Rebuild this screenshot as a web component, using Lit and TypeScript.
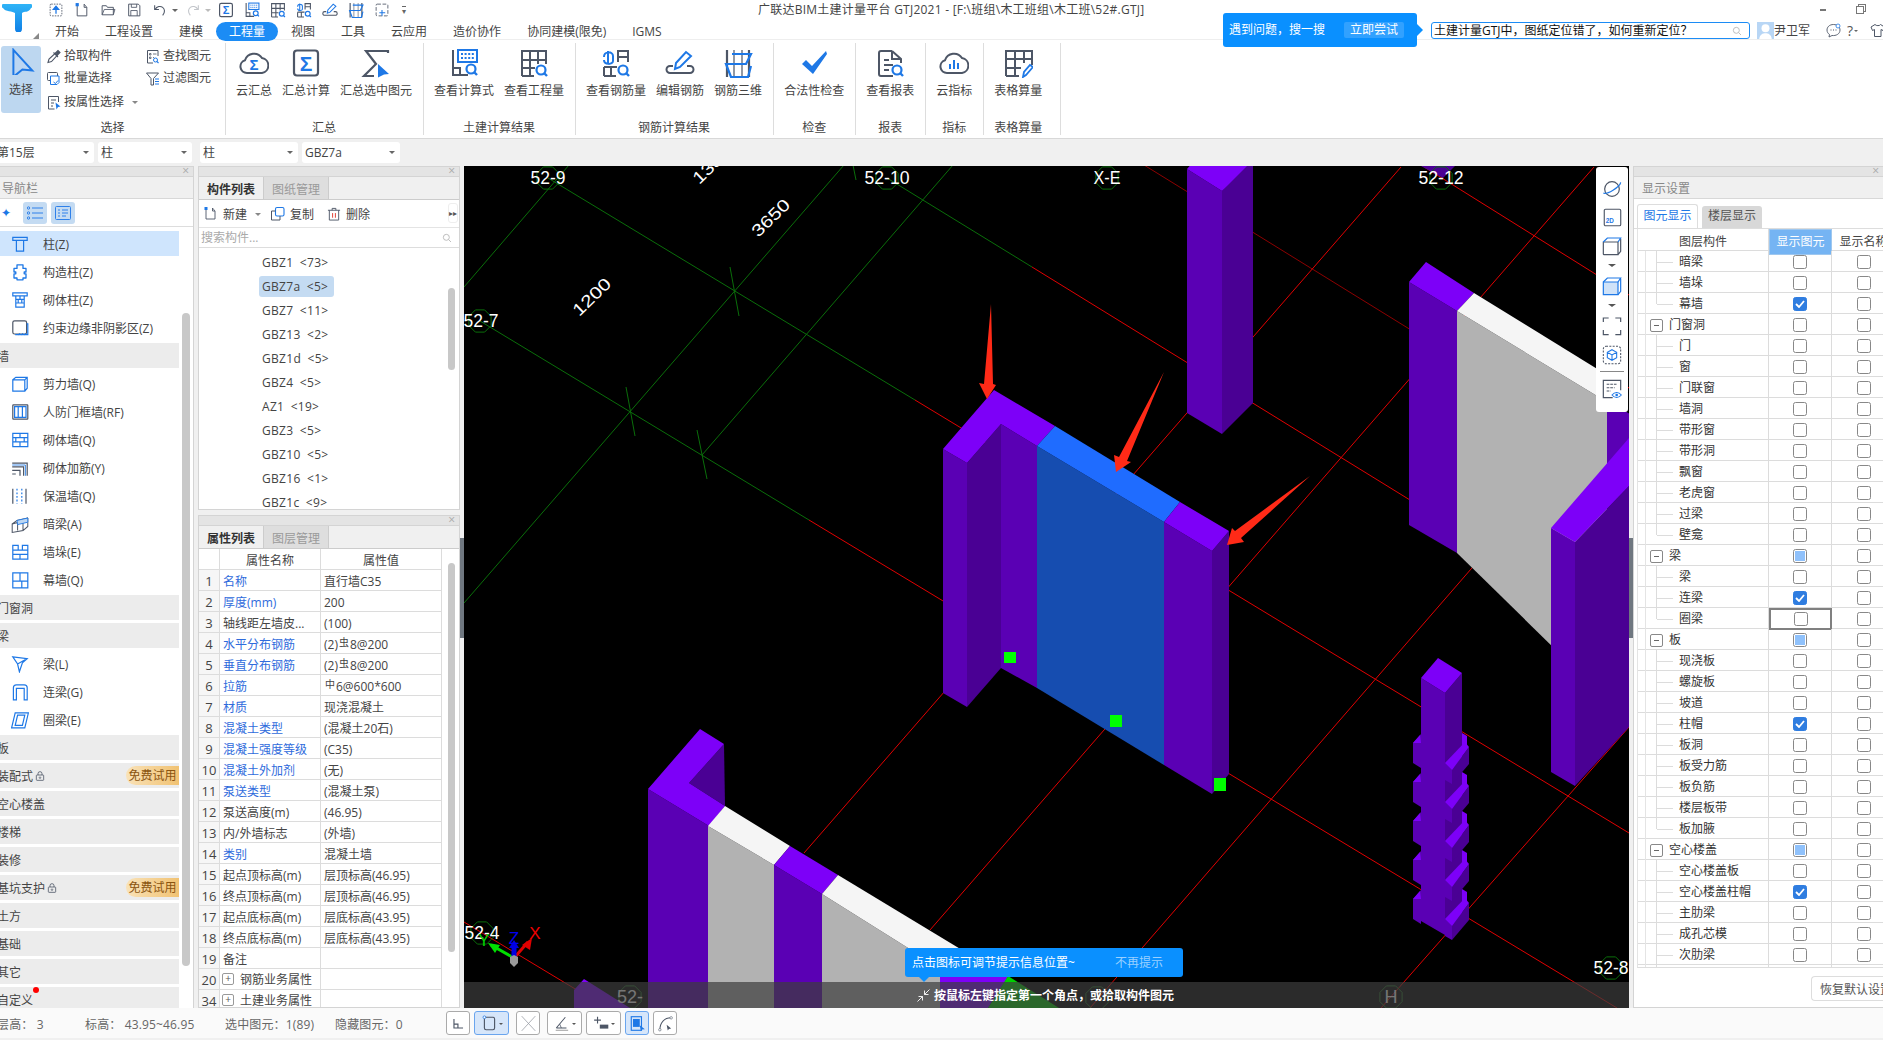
import { LitElement, html, css, svg, TemplateResult } from "lit";
import { customElement } from "lit/decorators.js";

const G = "#4d5666";
const B = "#1e78e6";

const sigma = (x: number, y: number, s: number, c = B) =>
  svg`<text x=${x} y=${y} font-size=${s} font-family="Liberation Sans" font-weight="700" text-anchor="middle" fill=${c} stroke="none">Σ</text>`;

const I: Record<string, TemplateResult> = {
  upload: svg`<rect x="4" y="4" width="22" height="22" rx="2" stroke=${G} stroke-width="1.6" stroke-dasharray="3 2"/><path d="M15 22V12M10 14l5-6 5 6z" stroke=${B} stroke-width="2.4" fill=${B}/>`,
  newdoc: svg`<path d="M6 6v20h18V10h-5V4" stroke=${G} stroke-width="1.8"/><path d="M19 4l5 6" stroke=${G} stroke-width="1.6"/><rect x="3" y="2" width="6" height="6" fill=${B}/>`,
  folder: svg`<path d="M4 24V7h8l2 3h11v14z" stroke=${G} stroke-width="1.8"/><path d="M4 24l4-10h20l-3 10" stroke=${G} stroke-width="1.6"/>`,
  save: svg`<path d="M5 4h18l3 3v19H5z" stroke=${G} stroke-width="1.8"/><path d="M10 4v6h10V4M9 26V16h12v10" stroke=${G} stroke-width="1.6"/>`,
  undo: svg`<path d="M5 6v8h8M6 14c3-6 10-7 14-4s5 9 0 15" stroke=${G} stroke-width="2"/>`,
  redo: svg`<path d="M25 6v8h-8M24 14c-3-6-10-7-14-4s-5 9 0 15" stroke="#c2c5ca" stroke-width="2"/>`,
  boxsum: svg`<rect x="3" y="2.5" width="24" height="25" rx="3" stroke=${G} stroke-width="2.2"/>${sigma(15, 23, 21)}`,
  cloudsum: svg`<path d="M8 25a6.5 6.5 0 0 1-2-12.7A9.5 9.5 0 0 1 23 10a7.6 7.6 0 0 1 0 15z" stroke=${G} stroke-width="2"/>${sigma(15, 22, 15)}`,
  sumsel: svg`<path d="M27 5V3H5l10 13L3 28h10" stroke=${G} stroke-width="2.2"/><path d="M17 16l11 10-5 .5-6 3z" fill=${B}/>`,
  calc: svg`<path d="M4 2v25h15M4 20h7v7" stroke=${G} stroke-width="2"/><rect x="9" y="2" width="19" height="12" stroke=${B} stroke-width="2"/><path d="M12 6h13M12 10h13" stroke=${B} stroke-width="1.8" stroke-dasharray="2 1.6"/><circle cx="22" cy="21" r="4.5" stroke=${B} stroke-width="2.2"/><path d="M25 24l3 3" stroke=${B} stroke-width="2.4"/>`,
  tableq: svg`<path d="M3 28V3h24v13M3 12h24M3 20h13M11 3v25M19 3v13M3 28h12" stroke=${G} stroke-width="2"/><circle cx="22" cy="22" r="4.5" stroke=${B} stroke-width="2.2"/><path d="M25 25l3 3" stroke=${B} stroke-width="2.4"/>`,
  rebarq: svg`<path d="M3 9c0-6 9-6 9-1v5c0 4-9 4-9-1M7 3v12" stroke=${B} stroke-width="2"/><path d="M17 14V3h10v11M17 9h10M3 19h13M3 28V19M3 28h12M10 19v9" stroke=${G} stroke-width="2"/><circle cx="22" cy="22" r="4.5" stroke=${B} stroke-width="2.2"/><path d="M25 25l3 3" stroke=${B} stroke-width="2.4"/>`,
  editreb: svg`<path d="M8 18H5a2.5 2.5 0 0 0 0 7h20a2.5 2.5 0 0 0 0-7h-3" stroke=${G} stroke-width="2"/><path d="M10 21l1-6L21 4l5 4-11 11z" stroke=${B} stroke-width="2"/>`,
  reb3d: svg`<path d="M4 2v27M26 2v27" stroke=${G} stroke-width="2.2"/><path d="M11 2v27M19 2v27" stroke=${G} stroke-width="1.2"/><path d="M9 6h19l-5 10H3l5 13h17l3-11" stroke=${B} stroke-width="2.2"/>`,
  check: svg`<path d="M3 16l4-4 6 6L27 3l1 3-14 20z" fill=${B}/>`,
  report: svg`<path d="M17 3H6a2 2 0 0 0-2 2v21a2 2 0 0 0 2 2h12M17 3l9 8v4M17 3v8h9" stroke=${G} stroke-width="2"/><path d="M9 12h5M9 17h9M9 22h5" stroke=${G} stroke-width="2"/><circle cx="22" cy="22" r="4.5" stroke=${B} stroke-width="2.2"/><path d="M25 25l3 3" stroke=${B} stroke-width="2.4"/>`,
  cloudbar: svg`<path d="M8 25a6.5 6.5 0 0 1-2-12.7A9.5 9.5 0 0 1 23 10a7.6 7.6 0 0 1 0 15z" stroke=${G} stroke-width="2"/><path d="M11 16v5M15 12v9M19 15v6" stroke=${B} stroke-width="2"/>`,
  tableedit: svg`<path d="M3 28V3h26v14M3 11h26M3 20h15M12 3v25M21 3v12M3 28h13" stroke=${G} stroke-width="2"/><path d="M20 29l1-5 6-7 3 2-7 8z" stroke=${B} stroke-width="1.8"/>`,
  copyplus: svg`<rect x="4" y="4" width="22" height="22" rx="2" stroke=${G} stroke-width="1.6" stroke-dasharray="7 3"/><path d="M15 15v11M10 20h11" stroke=${B} stroke-width="2"/>`,
  arrow: svg`<path d="M6 2l21 23-11 -1-10 8z" stroke=${B} stroke-width="2.2" fill="#bcd6f2"/>`,
  dropper: svg`<path d="M4 27l2-7L18 9l4 4L11 25z" stroke=${G} stroke-width="2.2"/><path d="M15 7l9 9M19 8l5-5 4 4-5 5z" stroke=${G} stroke-width="2.2" fill=${G}/>`,
  batch: svg`<rect x="3" y="3" width="20" height="16" rx="2" stroke=${G} stroke-width="2"/><path d="M9 10h17v13l-4 4H9z" stroke=${B} stroke-width="2" fill="#fff"/><path d="M15 22l4 3 5-6" stroke=${B} stroke-width="2"/>`,
  prop: svg`<path d="M25 14V3H5v25h12" stroke=${G} stroke-width="2"/><path d="M10 10h10M10 16h6M10 22h4" stroke=${G} stroke-width="2"/><path d="M19 15l10 8-5 1-3 5z" fill=${B}/>`,
  find: svg`<path d="M26 14V3H5v25h11" stroke=${G} stroke-width="2"/><path d="M9 9h3v3H9zM16 10h7M9 16h3v3H9zM16 17h2" stroke=${G} stroke-width="1.6"/><circle cx="21" cy="22" r="4" stroke=${B} stroke-width="2"/><path d="M24 25l3 3" stroke=${B} stroke-width="2.2"/>`,
  filter: svg`<path d="M3 4h24L17 15v13h-5V15z" stroke=${G} stroke-width="2"/><path d="M20 16h8M20 21h8M20 26h8" stroke=${B} stroke-width="2"/>`,
  copy: svg`<rect x="11" y="3" width="17" height="17" rx="3" stroke=${B} stroke-width="2.2"/><path d="M11 10H3v18h17v-8" stroke=${G} stroke-width="2"/>`,
  del: svg`<path d="M5 7v21h20V7M2 7h26M11 7V3h8v4" stroke=${G} stroke-width="2"/><path d="M12 13v10M18 13v10" stroke="#e0372c" stroke-width="2"/>`,
  zhu: svg`<path d="M3 4h24v5H3zM9 9h12v18H9z" stroke=${B} stroke-width="2"/>`,
  gzz: svg`<path d="M10 3h10v6h5v6h-3v3h3v7h-5v3H10v-3H5v-7h3v-3H5V9h5z" stroke=${B} stroke-width="2.2" stroke-linejoin="round"/>`,
  qtz: svg`<path d="M3 3h24v5H3zM8 8h14v19H8zM8 14h14M8 20h14M15 8v6M12 14v6M18 14v6" stroke=${B} stroke-width="2"/>`,
  edge: svg`<rect x="3" y="3" width="23" height="22" rx="3" stroke=${G} stroke-width="2"/><path d="M26 8h2v18H8v-1M12 27l3-3M17 27l3-3M22 27l3-3" stroke=${B} stroke-width="2"/>`,
  wall: svg`<path d="M3 8h20v19H3zM3 8l5-4h19v18l-4 5M23 8l4-4" stroke=${B} stroke-width="2"/>`,
  rf: svg`<rect x="3" y="3" width="25" height="24" rx="1" stroke=${G} stroke-width="2"/><path d="M6 6h19v18H6zM12 6v18M19 6v18" stroke=${B} stroke-width="2"/>`,
  brick: svg`<path d="M3 4h25v22H3zM3 11h25M3 18h25M15 4v7M8 11v7M22 11v7M15 18v8" stroke=${B} stroke-width="2"/>`,
  jiajin: svg`<path d="M2 7h25v21M2 13h19v15M2 19h13v9M2 25h6" stroke=${G} stroke-width="2"/><path d="M2 10h22v18" stroke=${B} stroke-width="1.4"/>`,
  baowen: svg`<path d="M3 3v25M25 3v25" stroke=${G} stroke-width="2"/><path d="M10 3v25M18 3v25" stroke=${B} stroke-width="2" stroke-dasharray="3 3"/>`,
  anliang: svg`<path d="M2 15l18-5v16L2 29zM2 15l8-6 18-4-8 5M28 5v14l-8 7M11 12v14" stroke=${G} stroke-width="1.7"/><path d="M10 9l18-4v7l-17 4z" fill="#bcd6f2" stroke=${B} stroke-width="1.5"/>`,
  duo: svg`<path d="M3 4h9v8h7V4h9v23H3zM3 12h9M19 12h9M3 19h25M15 19v8" stroke=${B} stroke-width="2"/>`,
  mu: svg`<path d="M3 3h25v25H3zM15 3v14M3 17h25M18 17v11" stroke=${B} stroke-width="2"/>`,
  liang: svg`<path d="M3 3l24 3-8 7-5 15-3-13zM11 15L27 6M3 3l8 12" stroke=${B} stroke-width="2"/>`,
  lian: svg`<path d="M4 28V8a5 5 0 0 1 5-5h13a5 5 0 0 1 5 5v20h-5V9H9v19z" stroke=${B} stroke-width="2"/>`,
  quan: svg`<path d="M7 3h22l-6 25H1zM11 7h12l-4 17H7z" stroke=${B} stroke-width="2"/>`,
  orbit: svg`<circle cx="15" cy="15" r="11" stroke=${G} stroke-width="1.8"/><path d="M2 21C7 24 27 12 28 5" stroke=${B} stroke-width="1.8"/>`,
  d2: svg`<rect x="2" y="2" width="26" height="26" rx="2" stroke=${G} stroke-width="1.8"/><text x="4.5" y="24" font-size="10" font-family="Liberation Sans" font-weight="700" fill=${B} stroke="none">2D</text>`,
  cube: svg`<path d="M2 9h22v19H3a1 1 0 0 1-1-1zM24 28l4-5V4" stroke=${G} stroke-width="1.8"/><path d="M2 9l6-6h20l-4 6" stroke=${B} stroke-width="1.8"/>`,
  cubef: svg`<path d="M2 9h22v19H2z" stroke=${B} stroke-width="1.8" fill="#cfe2f8"/><path d="M24 28l4-5V4M2 9l6-6h20l-4 6" stroke=${B} stroke-width="1.8"/>`,
  frame: svg`<path d="M2 9V3h8M20 3h8v6M28 21v7h-8M10 28H2v-7" stroke=${G} stroke-width="1.8"/>`,
  dcube: svg`<rect x="2" y="2" width="26" height="26" rx="4" stroke=${G} stroke-width="1.6" stroke-dasharray="3 2"/><path d="M15 7l7 4v8l-7 4-7-4v-8zM8 11l7 4 7-4M15 15v8" stroke=${B} stroke-width="1.6"/>`,
  listeye: svg`<path d="M28 17V2H2v26h14" stroke=${G} stroke-width="1.8"/><path d="M7 8h16M7 13h12M7 18h6" stroke=${G} stroke-width="1.6" stroke-dasharray="4 1.4"/><path d="M15 24c4-5 10-5 14 0-4 5-10 5-14 0z" stroke=${B} stroke-width="1.6"/><circle cx="22" cy="24" r="2" fill=${B}/>`,
  sb0: svg`<path d="M7 7v16h16M7 16h7v7" stroke=${G} stroke-width="2"/>`,
  sb1: svg`<rect x="6" y="4" width="18" height="22" rx="3" stroke=${G} stroke-width="2"/><circle cx="6" cy="4" r="2.4" fill="#fff" stroke=${B} stroke-width="1.4"/>`,
  sb2: svg`<path d="M3 2l24 26M27 2L3 28" stroke="#9a9ea5" stroke-width="1.4"/>`,
  sb3: svg`<path d="M4 23L20 4M4 23h18" stroke=${G} stroke-width="1.8"/><path d="M10 16l3 7" stroke=${G} stroke-width="1.4"/><path d="M3 27h22" stroke="#aaa" stroke-width="2"/>`,
  sb4: svg`<path d="M8 3v12M2 9h12" stroke=${G} stroke-width="2"/><rect x="12" y="17" width="15" height="7" fill=${G}/>`,
  sb5: svg`<rect x="4" y="3" width="18" height="24" stroke=${B} stroke-width="2"/><rect x="7" y="7" width="12" height="14" fill=${B}/><path d="M19 18l9 7-5 .5-2 3z" fill=${B}/>`,
  sb6: svg`<path d="M5 27c0-14 8-22 20-22" stroke=${G} stroke-width="1.8"/><circle cx="5" cy="26" r="2.2" fill="#fff" stroke=${G}/><circle cx="25" cy="5" r="2.2" fill="#fff" stroke=${G}/><path d="M17 17l8 7-4 .5-2 3z" fill=${G}/>`,
  mag: svg`<circle cx="13" cy="13" r="9" stroke="#b5b5b5" stroke-width="2.6"/><path d="M20 20l7 7" stroke="#b5b5b5" stroke-width="2.6"/>`,
  lock: svg`<rect x="4" y="12" width="22" height="16" rx="2" stroke=${G} stroke-width="2.4"/><path d="M9 12V8a6 6 0 0 1 12 0v4" stroke=${G} stroke-width="2.4"/><circle cx="15" cy="20" r="2.4" stroke=${G} stroke-width="2"/>`,
  chat: svg`<path d="M15 3C7 3 2 8 2 14c0 4 2 7 5 9l-1 5 6-3c8 1 16-3 16-11 0-6-5-11-13-11z" stroke=${G} stroke-width="1.8"/><path d="M9 14h2M14 14h2M19 14h2" stroke=${G} stroke-width="2"/><circle cx="24" cy="6" r="4" fill="#fff" stroke=${B} stroke-width="1.6"/>`,
  shirt: svg`<path d="M10 3L2 8l3 7 4-2v14h13V13l4 2 3-7-8-5c-1 3-9 3-11 0z" stroke=${G} stroke-width="2"/>`,
  avatar: svg`<rect width="30" height="30" fill="#b8d6f5"/><circle cx="15" cy="11" r="7" fill="#fff"/><path d="M4 30c1-8 6-10 11-10s10 2 11 10z" fill="#fff"/>`,
  pinch: svg`<path d="M17 13l10-10M17 5v8h8M13 17L3 27M13 25v-8H5" stroke="#fff" stroke-width="1.8"/>`,
};

const ic = (n: string, s = 30) =>
  html`<svg class="ic" width=${s} height=${s} viewBox="0 0 30 30" fill="none">${I[n]}</svg>`;

type Nav = { t: string; i?: string; g?: boolean; sel?: boolean; lock?: boolean; free?: boolean; dot?: boolean };
const NAV: Nav[] = [
  { t: "柱(Z)", i: "zhu", sel: true }, { t: "构造柱(Z)", i: "gzz" }, { t: "砌体柱(Z)", i: "qtz" }, { t: "约束边缘非阴影区(Z)", i: "edge" },
  { t: "墙", g: true }, { t: "剪力墙(Q)", i: "wall" }, { t: "人防门框墙(RF)", i: "rf" }, { t: "砌体墙(Q)", i: "brick" },
  { t: "砌体加筋(Y)", i: "jiajin" }, { t: "保温墙(Q)", i: "baowen" }, { t: "暗梁(A)", i: "anliang" }, { t: "墙垛(E)", i: "duo" }, { t: "幕墙(Q)", i: "mu" },
  { t: "门窗洞", g: true }, { t: "梁", g: true }, { t: "梁(L)", i: "liang" }, { t: "连梁(G)", i: "lian" }, { t: "圈梁(E)", i: "quan" },
  { t: "板", g: true }, { t: "装配式", g: true, lock: true, free: true }, { t: "空心楼盖", g: true }, { t: "楼梯", g: true }, { t: "装修", g: true },
  { t: "基坑支护", g: true, lock: true, free: true }, { t: "土方", g: true }, { t: "基础", g: true }, { t: "其它", g: true }, { t: "自定义", g: true, dot: true },
];

const COMPS = ["GBZ1 <73>", "GBZ7a <5>", "GBZ7 <11>", "GBZ13 <2>", "GBZ1d <5>", "GBZ4 <5>", "AZ1 <19>", "GBZ3 <5>", "GBZ10 <5>", "GBZ16 <1>", "GBZ1c <9>"];

type Prop = [string, string, string, boolean, number?];
const PROPS: Prop[] = [
  ["1", "名称", "直行墙C35", true], ["2", "厚度(mm)", "200", true], ["3", "轴线距左墙皮...", "(100)", false],
  ["4", "水平分布钢筋", "(2)|虫|8@200", true], ["5", "垂直分布钢筋", "(2)|虫|8@200", true], ["6", "拉筋", "|中|6@600*600", true],
  ["7", "材质", "现浇混凝土", true], ["8", "混凝土类型", "(混凝土20石)", true], ["9", "混凝土强度等级", "(C35)", true],
  ["10", "混凝土外加剂", "(无)", true], ["11", "泵送类型", "(混凝土泵)", true], ["12", "泵送高度(m)", "(46.95)", false],
  ["13", "内/外墙标志", "(外墙)", false], ["14", "类别", "混凝土墙", true], ["15", "起点顶标高(m)", "层顶标高(46.95)", false],
  ["16", "终点顶标高(m)", "层顶标高(46.95)", false], ["17", "起点底标高(m)", "层底标高(43.95)", false], ["18", "终点底标高(m)", "层底标高(43.95)", false],
  ["19", "备注", "", false], ["20", "钢筋业务属性", "", false, 1], ["34", "土建业务属性", "", false, 1],
];

type Lay = { t: string; k?: "c" | "g" | "p" | "l"; g?: boolean; last?: boolean; focus?: boolean };
const LAYERS: Lay[] = [
  { t: "暗梁" }, { t: "墙垛" }, { t: "幕墙", k: "c", last: true }, { t: "门窗洞", g: true },
  { t: "门" }, { t: "窗" }, { t: "门联窗" }, { t: "墙洞" }, { t: "带形窗" }, { t: "带形洞" }, { t: "飘窗" }, { t: "老虎窗" }, { t: "过梁" }, { t: "壁龛", last: true },
  { t: "梁", g: true, k: "p" }, { t: "梁" }, { t: "连梁", k: "c" }, { t: "圈梁", last: true, focus: true },
  { t: "板", g: true, k: "p" }, { t: "现浇板" }, { t: "螺旋板" }, { t: "坡道" }, { t: "柱帽", k: "c" }, { t: "板洞" }, { t: "板受力筋" }, { t: "板负筋" }, { t: "楼层板带" }, { t: "板加腋", last: true },
  { t: "空心楼盖", g: true, k: "p" }, { t: "空心楼盖板" }, { t: "空心楼盖柱帽", k: "c" }, { t: "主肋梁" }, { t: "成孔芯模" }, { t: "次肋梁" }, { t: "" },
];

const BR = "#7d00f8", F1 = "#5a00b4", F2 = "#4a0094", BT = "#1f6cff", BF = "#164db0", WT = "#f5f5f5", GF = "#b2b2b2";
const poly = (p: string, f: string) => svg`<polygon points=${p} fill=${f}/>`;
const seg = (a: number, b: number, c: number, d: number, col: string) => svg`<line x1=${a} y1=${b} x2=${c} y2=${d} stroke=${col} stroke-width="1"/>`;
const GL = "#0a6e0a", RL = "#e00000", DR = "#8c0000";

const hex = (x: number, y: number, col = GL) => {
  const pts = [0, 1, 2, 3, 4, 5, 6, 7].map((i) => {
    const a = (Math.PI / 4) * i + Math.PI / 8;
    return `${(x + 12 * Math.cos(a)).toFixed(1)},${(y + 12 * Math.sin(a)).toFixed(1)}`;
  }).join(" ");
  return svg`<polygon points=${pts} fill="none" stroke=${col}/>`;
};
const lab = (x: number, y: number, t: string, w: number, col = "#fff") =>
  svg`<text x=${x} y=${y} fill=${col} font-family="Liberation Sans" font-size="18" text-anchor="middle" dominant-baseline="central" textLength=${w} lengthAdjust="spacingAndGlyphs">${t}</text>`;
const dim = (x: number, y: number, t: string) =>
  svg`<text transform="translate(${x} ${y}) rotate(-44)" fill="#fff" font-family="Liberation Sans" font-size="17" text-anchor="middle" dominant-baseline="central" textLength="46" lengthAdjust="spacingAndGlyphs">${t}</text>`;

function knobs() {
  const out: TemplateResult[] = [];
  for (let i = 0; i < 5; i++) {
    const y = 743 + i * 39;
    out.push(poly(`1462,${y - 10} 1467,${y - 7} 1467,${y + 3} 1462,${y + 8}`, BR));
    out.push(poly(`1413,${y} 1421,${y - 9} 1421,${y + 25} 1413,${y + 20}`, F1));
    out.push(poly(`1413,${y} 1420,${y - 8} 1421,${y}`, BR));
  }
  out.push(poly("1421,678 1445,693 1445,935 1421,921", F1));
  out.push(poly("1445,693 1462,673 1462,915 1445,935", F2));
  out.push(poly("1438,658 1421,678 1445,693 1462,673", BR));
  for (let i = 0; i < 5; i++) {
    const y = 743 + i * 39;
    out.push(poly(`1445,${y + 20} 1452,${y + 27} 1452,${y + 41} 1445,${y + 37}`, F1));
    out.push(poly(`1452,${y + 27} 1469,${y + 4} 1469,${y + 21} 1452,${y + 41}`, F2));
    out.push(poly(`1445,${y + 20} 1465,${y - 1} 1469,${y + 4} 1452,${y + 27}`, BR));
  }
  return out;
}

const scene = () => svg`
  ${seg(569, 165, 464, 287, GL)}${seg(548, 178, 915, 400, GL)}${seg(480, 321, 809, 520, GL)}${seg(844, 165, 464, 603, GL)}${seg(953, 165, 702, 455, GL)}${seg(887, 178, 1032, 267, GL)}
  ${seg(730, 267, 739, 316, GL)}${seg(626, 387, 635, 436, GL)}${seg(697, 430, 707, 479, GL)}${seg(853, 165, 856, 180, GL)}
  ${seg(915, 400, 1629, 833, RL)}${seg(809, 520, 1617, 1008, RL)}${seg(1032, 267, 1629, 635, RL)}${seg(1144, 165, 1500, 385, DR)}${seg(1421, 165, 1629, 295, RL)}
  ${seg(1401, 167, 804, 853, RL)}${seg(1594, 167, 930, 930, RL)}${seg(1629, 387, 1090, 1008, RL)}${seg(1629, 727, 1381, 1008, RL)}${seg(464, 922, 640, 1028, RL)}
  ${hex(630, 997, "#2a7a2a")}${hex(1097, 998, "#2a7a2a")}${hex(1391, 997, "#2a7a2a")}
  ${poly("1421,166 1455,166 1443,178", F2)}
  ${poly("1187,169 1222,191 1222,434 1187,413", F1)}${poly("1222,191 1253,155 1253,403 1222,434", F2)}${poly("1187,169 1195,160 1253,160 1222,191", BR)}
  ${poly("943,449 967,463 967,707 943,693", F1)}${poly("967,463 1001,424 1001,668 967,707", F2)}${poly("1001,424 1037,446 1037,688 1001,668", F1)}
  ${poly("1037,446 1164,522 1164,765 1037,688", BF)}${poly("1164,522 1212,551 1212,794 1164,765", F1)}${poly("1212,551 1229,531 1229,774 1212,794", F2)}
  ${poly("994,390 943,449 967,463 1001,424 1037,446 1055,426", BR)}${poly("1055,426 1180,502 1164,522 1037,446", BT)}${poly("1180,502 1229,531 1212,551 1164,522", BR)}
  ${poly("1004,652 1016,652 1016,663 1004,663", "#00ff00")}${poly("1110,715 1122,715 1122,727 1110,727", "#00ff00")}${poly("1214,778 1226,778 1226,791 1214,791", "#00ff00")}
  ${poly("1607,400 1630,414 1630,445 1607,470", F1)}
  ${poly("1457,311 1607,402 1607,700 1457,553", GF)}
  ${poly("1409,282 1457,311 1457,553 1409,525", F1)}${poly("1426,262 1409,282 1457,311 1474,293", BR)}${poly("1474,293 1457,311 1607,402 1607,375", WT)}
  ${poly("1551,528 1575,542 1575,786 1551,772", F1)}${poly("1575,542 1629,486 1629,727 1575,786", F2)}${poly("1551,528 1629,438 1629,486 1575,542", BR)}
  ${knobs()}
  ${poly("584,979 574,990 574,1008 630,1008", BR)}
  ${poly("648,789 709,826 709,1008 648,1008", F1)}${poly("724,744 689,783 725,806", F2)}${poly("700,729 648,789 709,826 725,806 689,783 724,744", BR)}
  ${poly("708,826 774,865 774,1008 708,1008", GF)}${poly("725,806 790,846 774,865 708,826", WT)}
  ${poly("774,865 822,894 822,1008 774,1008", F1)}${poly("790,846 838,875 822,894 774,865", BR)}
  ${poly("822,894 940,968 940,1008 822,1008", GF)}${poly("838,875 962,950 940,968 822,894", WT)}
  ${poly("940,968 962,950 1008,977 988,1008 940,1008", BR)}${poly("1008,976 988,1008 1059,1008", "#00d000")}
  ${poly("991,304 993,384 996,385 987,399 979,383 984,384", "#ff2a17")}
  ${poly("1164,372 1127,461 1131,462 1116,472 1114,455 1119,457", "#ff2a17")}
  ${poly("1310,476 1241,538 1244,542 1227,545 1232,528 1235,531", "#ff2a17")}
  ${hex(548, 178)}${hex(887, 178)}${hex(1107, 178)}${hex(1441, 178)}${hex(480, 321)}${hex(482, 933)}${hex(1611, 968)}
  ${lab(548, 178, "52-9", 35)}${lab(887, 178, "52-10", 45)}${lab(1107, 178, "X-E", 27)}${lab(1441, 178, "52-12", 45)}${lab(481, 321, "52-7", 35)}${lab(482, 933, "52-4", 35)}${lab(1611, 968, "52-8", 35)}
  ${lab(630, 997, "52-", 26, "#fff")}${lab(1391, 997, "H", 13, "#fff")}
  ${dim(712, 165, "1350")}${dim(771, 218, "3650")}${dim(592, 297, "1200")}
  <path d="M514 958L491 945" stroke="#00e000" stroke-width="3"/><polygon points="488,943 500,945 495,953" fill="#00e000"/>
  <path d="M514 958L528 942" stroke="#e00000" stroke-width="3"/><polygon points="532,938 530,950 522,945" fill="#e00000"/>
  <path d="M514 958V945" stroke="#0000e0" stroke-width="5"/><polygon points="514,940 519,948 509,948" fill="#0000e0"/>
  <polygon points="510,957 514,955 518,957 518,963 514,967 510,963" fill="#9a9a9a"/>
  <text x="535" y="939" fill="#f00000" font-size="17" font-family="Liberation Sans" text-anchor="middle">X</text>
  <text x="514" y="944" fill="#0000f0" font-size="17" font-family="Liberation Sans" text-anchor="middle">Z</text>
  <text x="484" y="946" fill="#00d000" font-size="17" font-family="Liberation Sans" text-anchor="middle">Y</text>
`;

@customElement("app-root")
export class AppRoot extends LitElement {
  static styles = css`
    :host { display: block; width: 1883px; height: 1040px; overflow: hidden; background: #f0f0f0; color: #444;
      font: 12px/16px "Open Sans", "Noto Sans CJK SC", sans-serif; }
    * { box-sizing: border-box; }
    .ic { display: block; flex: none; }
    .header { position: relative; display: flex; height: 40px; background: #fff; border-bottom: 1px solid #eee; }
    .logo { width: 42px; flex: none; padding: 3px 0 0 2px; position: relative; }
    .logo i { position: absolute; left: 33px; top: 33px; border: 3px solid transparent; border-right-color: #888; border-bottom-color: #888; }
    .rows { flex: 1; min-width: 0; }
    .r1 { display: grid; grid-template-columns: 716px auto 1fr auto; height: 20px; align-items: center; }
    .qat { display: flex; align-items: center; gap: 10px; padding-left: 6px; }
    .qat .cr { width: 0; height: 0; border: 3px solid transparent; border-top-color: #666; margin: 4px -3px 0 -6px; }
    .qat .cr.off { border-top-color: #bbb; }
    .qat .more { color: #666; font-size: 8px; margin-left: 2px; line-height: 8px; border-top: 1px solid #666; }
    .title { color: #444; letter-spacing: .24px; }
    .win { grid-column: 4; display: flex; gap: 30px; padding-right: 19px; align-items: center; }
    .win b { display: block; width: 6px; height: 2px; background: #777; }
    .win u { display: block; width: 8px; height: 8px; border: 1px solid #777; box-shadow: 2px -2px 0 -1px #fff, 2px -2px 0 0 #777; }
    .r2 { display: flex; align-items: center; height: 21px; }
    .menu { padding: 0 13px; height: 19px; line-height: 20px; white-space: nowrap; color: #444; align-self: flex-end; }
    .menu.on { background: #1c8cf5; color: #fff; border-radius: 10px; }
    .r2 .sp { flex: 1; }
    .search { width: 319px; height: 17px; border: 1px solid #1c8cf5; border-radius: 3px; background: #fff; color: #111; display: flex; align-items: center; justify-content: space-between; padding: 0 7px 0 2px; line-height: 15px; margin-right: 7px; white-space: nowrap; flex: none; }
    .user { display: flex; align-items: center; width: 53px; flex: none; color: #444; white-space: nowrap; }
    .tools { display: flex; align-items: center; gap: 6px; margin-left: 16px; margin-right: -2px; flex: none; }
    .tools span { font-size: 14px; color: #555; }
    .tools i { border: 2px solid transparent; border-top-color: #666; margin: 3px 6px 0 -5px; }
    .tip { position: absolute; left: 1223px; top: 13px; width: 194px; height: 34px; background: #0a90ff; border-radius: 3px; color: #fff; display: flex; align-items: center; padding-left: 6px; z-index: 3; }
    .tip::after { content: ""; position: absolute; right: -6px; top: 11px; border: 6px solid transparent; border-left-color: #0a90ff; border-right-width: 0; }
    .tip em { font-style: normal; margin-left: 19px; background: rgba(255, 255, 255, .16); padding: 0 6px; height: 16px; line-height: 16px; border-radius: 2px; }

    .ribbon { display: flex; height: 99px; background: #fff; border-bottom: 1px solid #d8d8d8; }
    .grp { height: 92px; margin-top: 3px; border-right: 1px solid #ddd; display: flex; flex-direction: column; padding: 0 11px 0 10px; color: #444; }
    .grp.g1 { width: 226px; padding: 0; }
    .grp.last { padding-right: 18px; }
    .grp .ct { flex: 1; display: flex; gap: 10px; }
    .grp .lb { height: 22px; line-height: 30px; text-align: center; flex: none; }
    .big { display: flex; flex-direction: column; align-items: center; padding-top: 5px; white-space: nowrap; }
    .big span { margin-top: 6px; line-height: 14px; }
    .sel-btn { width: 40px; height: 67px; margin: 3px 0 0 1px; background: #bdd7f0; border-radius: 3px; display: flex; flex-direction: column; align-items: center; padding-top: 2px; color: #444; }
    .sel-btn span { margin-top: 8px; line-height: 14px; }
    .g1 .ct { gap: 0; }
    .col { padding-top: 2px; display: flex; flex-direction: column; }
    .col.c2 { margin-left: 5px; width: 99px; }
    .sm { display: flex; align-items: center; gap: 3px; height: 22px; white-space: nowrap; }
    .sm.third { margin-top: 2px; }
    .sm i { border: 3px solid transparent; border-top-color: #888; margin: 3px 0 0 5px; }

    .floors { display: flex; height: 27px; gap: 4px; padding-top: 3px; background: #f0f0f0; }
    .slct { width: 94px; height: 21px; background: #fff; border-radius: 3px; display: flex; align-items: center; justify-content: space-between; padding: 0 5px 0 3px; color: #444; line-height: 22px; }
    .slct i { border: 3px solid transparent; border-top-color: #666; margin-top: 3px; }
    .slct.a { padding-left: 0; margin-left: -3px; width: 97px; }
    .slct.w { width: 98px; margin-left: 4px; }
    .slct.w + .slct.w { margin-left: 0; }

    .main { display: flex; height: 842px; }
    .strip { height: 11px; flex: none; background: #e4e4e4; border-top: 1px solid #d4d4d4; border-bottom: 1px solid #d4d4d4; position: relative; }
    .strip::after { content: "×"; position: absolute; right: 4px; top: -3px; font-size: 12px; line-height: 13px; color: #aaa; }
    .ph { height: 22px; flex: none; line-height: 23px; padding-left: 2px; color: #888; background: #f0f0f0; border-bottom: 1px solid #d8d8d8; }
    .ph.r { padding-left: 8px; }
    .nav { width: 194px; flex: none; display: flex; flex-direction: column; background: #fff; border-right: 1px solid #d4d4d4; overflow: hidden; }
    .navtb { height: 28px; flex: none; display: flex; align-items: center; border-bottom: 1px solid #ddd; padding-left: 1px; }
    .navtb .spark { color: #1e78e6; width: 22px; font-size: 12px; line-height: 12px; }
    .navtb .nb { width: 24px; height: 22px; background: #c4dbf2; border-radius: 3px; display: flex; align-items: center; justify-content: center; margin-right: 4px; }
    .navbody { flex: 1; display: flex; min-height: 0; }
    .navlist { width: 179px; flex: none; padding-top: 4px; }
    .nr { height: 25px; margin-bottom: 3px; display: flex; align-items: center; white-space: nowrap; position: relative; color: #444; }
    .nr .nic { width: 43px; flex: none; padding-left: 11px; padding-top: 1px; }
    .nr .tx { padding-top: 2px; }
    .nr.sel { background: #cfe5fd; }
    .nr.grp2 { background: #ececec; }
    .nr.grp2 span.tx { margin-left: -3px; }
    .nr .lk { margin-left: 2px; }
    .free { position: absolute; right: 0; top: 3px; width: 53px; height: 19px; line-height: 20px; text-align: center; border-radius: 10px 0 0 10px; background: linear-gradient(90deg, #f9e2b8, #f1c272); color: #8a5410; }
    .dot { position: absolute; left: 33px; top: 0; width: 6px; height: 6px; border-radius: 50%; background: #f00; }
    .sbar { flex: 1; position: relative; padding: 86px 3px 0; }
    .sbar b { display: block; width: 8px; height: 653px; border-radius: 4px; background: #c8c8c8; }

    .midc { width: 262px; margin-left: 4px; flex: none; display: flex; flex-direction: column; gap: 5px; }
    .pane { display: flex; flex-direction: column; background: #fff; border: 1px solid #d4d4d4; border-top: 0; overflow: hidden; min-height: 0; }
    .pane.a { height: 344px; flex: none; }
    .pane.b { flex: 1; }
    .tabs { height: 23px; flex: none; display: flex; background: #f0f0f0; border-bottom: 1px solid #ccc; }
    .tab { width: 65px; text-align: center; line-height: 25px; background: #f0f0f0; color: #333; font-weight: 700; border-right: 1px solid #ccc; }
    .tab.off { background: #dedede; color: #9a9a9a; font-weight: 400; }
    .tb { height: 28px; flex: none; display: flex; align-items: center; padding-left: 4px; border-bottom: 1px solid #e4e4e4; position: relative; }
    .tb .t { display: flex; align-items: center; gap: 5px; margin-right: 13px; color: #444; line-height: 19px; padding-top: 2px; }
    .tb .t .ic { margin-top: -2px; }
    .tb i { border: 3px solid transparent; border-top-color: #888; margin: 3px -4px 0 3px; }
    .tb .mo { position: absolute; right: 1px; top: 3px; width: 10px; height: 20px; border: 1px solid #eee; border-radius: 3px; font-size: 8px; line-height: 18px; color: #555; text-align: center; }
    .srch { height: 20px; flex: none; display: flex; align-items: center; justify-content: space-between; padding: 1px 7px 0 2px; color: #aaa; border-bottom: 1px solid #ddd; }
    .lst { flex: 1; display: flex; min-height: 0; }
    .items { flex: 1; padding-top: 2px; overflow: hidden; }
    .ci { height: 24px; padding-left: 60px; display: flex; align-items: center; }
    .ci span { padding: 0 3px; height: 21px; line-height: 21px; border-radius: 3px; word-spacing: 3px; letter-spacing: .3px; color: #444; white-space: nowrap; }
    .ci.on span { background: #c4dbf2; padding-right: 6px; }
    .scr { width: 17px; flex: none; padding-left: 6px; }
    .scr b { display: block; width: 7px; border-radius: 4px; background: #c8c8c8; }
    .scr.s1 { padding-top: 40px; } .scr.s1 b { height: 82px; }
    .scr.s2 { padding-top: 14px; } .scr.s2 b { height: 389px; }
    .ptable { flex: 1; display: flex; min-height: 0; overflow: hidden; }
    .pgrid { display: grid; grid-template-columns: 21px 101px 121px; grid-auto-rows: 21px; width: 243px; flex: none; align-content: start; }
    .pgrid > div { border-right: 1px solid #dcdcdc; border-bottom: 1px solid #dcdcdc; line-height: 23px; white-space: nowrap; overflow: hidden; padding-left: 3px; color: #444; }
    .pgrid .hd { text-align: center; padding: 0; }
    .pgrid .ix { text-align: center; padding: 0; background: #f6f6f6; font-size: 13px; }
    .pgrid .ln { color: #2f6bdc; }
    .pgrid sup { font-size: 10px; line-height: 0; vertical-align: 3px; margin: 0 1px; }
    .pgrid .ex { display: flex; align-items: center; gap: 6px; padding-left: 2px; }
    .plus { width: 12px; height: 12px; border: 1px solid #999; border-radius: 2px; font-size: 10px; line-height: 9px; text-align: center; color: #555; flex: none; }

    .split { width: 4px; flex: none; }
    .split b { display: block; width: 4px; height: 100px; margin-top: 372px; background: #6f7780; }
    .cv { width: 1165px; flex: none; position: relative; background: #000; overflow: hidden; }
    .cv svg.scene { display: block; }
    .hint { position: absolute; left: 0; right: 0; bottom: 0; height: 26px; background: rgba(60, 60, 60, .71); color: #fff; font-weight: 700; display: flex; align-items: center; padding-left: 452px; gap: 3px; }
    .hint span { padding-top: 2px; }
    .tip2 { position: absolute; left: 441px; top: 782px; width: 278px; height: 29px; background: #0a90ff; border-radius: 3px; color: #fff; display: flex; align-items: center; justify-content: space-between; padding: 0 20px 0 7px; }
    .tip2 span { color: #9bd0ff; }
    .tip2::after { content: ""; position: absolute; left: 14px; bottom: -5px; border: 5px solid transparent; border-top-color: #0a90ff; border-bottom-width: 0; }
    .vt { position: absolute; right: 1px; top: 1px; width: 32px; height: 245px; background: #fff; border-radius: 3px; display: flex; flex-direction: column; align-items: center; padding-top: 12px; }
    .vt .ic { margin-bottom: 9px; }
    .vt .dn { width: 0; height: 0; border: 3px solid transparent; border-top-color: #555; border-bottom-width: 0; border-left-width: 4px; border-right-width: 4px; margin: -1px 0 9px; }
    .vt hr { width: 24px; border: 0; border-top: 1px solid #888; margin: -3px 0 7px; }

    .right { width: 250px; flex: none; display: flex; flex-direction: column; background: #fff; border: 1px solid #d4d4d4; border-top: 0; border-right: 0; overflow: hidden; }
    .rtabs { height: 30px; flex: none; display: flex; align-items: flex-end; gap: 4px; padding: 0 0 0 3px; border-bottom: 1px solid #ddd; }
    .rt { width: 61px; height: 24px; line-height: 22px; text-align: center; color: #1e78e6; background: #fff; border: 1px solid #ddd; border-bottom: 0; border-radius: 3px 3px 0 0; }
    .rt.off { height: 22px; line-height: 20px; width: 60px; color: #555; background: #d8d8d8; border: 0; }
    .lay { height: 739px; flex: none; margin-left: 3px; overflow: hidden; border-bottom: 1px solid #ddd; border-left: 1px solid #e4e4e4; }
    .lr { display: grid; grid-template-columns: 131px 63px 64px; height: 21px; border-bottom: 1px solid #dcdcdc; line-height: 22px; }
    .lr > div { border-right: 1px solid #dcdcdc; display: flex; align-items: center; justify-content: center; position: relative; white-space: nowrap; }
    .lr.hd { height: 22px; line-height: 24px; }
    .lr.hd .on { background: #75b4f3; color: #fff; border: 1px solid #9ec7ef; }
    .lr .focus { border: 2px solid #808080; }
    .lr .tree { justify-content: flex-start; color: #333; align-items: stretch; }
    .tree em { font-style: normal; align-self: center; }
    .rail1 { width: 8px; flex: none; border-right: 1px solid #e4e4e4; }
    .rail2 { width: 11px; flex: none; border-right: 1px solid #dcdcdc; }
    .rail2.end { height: 50%; }
    .hl { width: 16px; height: 1px; background: #dcdcdc; flex: none; align-self: center; margin-right: 6px; }
    .mbox { width: 13px; height: 13px; border: 1px solid #888; border-radius: 2px; margin: 0 6px 0 4px; align-self: center; display: flex; align-items: center; justify-content: center; flex: none; }
    .mbox::after { content: ""; width: 5px; border-top: 1px solid #666; }
    .cb { width: 14px; height: 14px; border: 1px solid #888; border-radius: 2.5px; background: #fff; display: flex; align-items: center; justify-content: center; }
    .cb.c { background: #2f7de0; border-color: #2f7de0; }
    .cb.p { padding: 1px; }
    .cb.p::after { content: ""; width: 100%; height: 100%; background: #8fc1fb; }
    .rfoot { flex: 1; display: flex; justify-content: flex-end; padding-top: 8px; }
    .rbtn { width: 72px; height: 25px; line-height: 25px; border: 1px solid #ddd; border-right: 0; border-radius: 4px 0 0 4px; padding-left: 8px; white-space: nowrap; overflow: hidden; color: #555; }

    .status { display: grid; grid-template-columns: 85px 140px 110px 111px 1fr; height: 32px; background: #fafafa; border-bottom: 2px solid #f0f0f0; align-items: center; color: #666; white-space: nowrap; }
    .status > .txt { padding-top: 3px; letter-spacing: .15px; }
    .status .first { margin-left: -3px; }
    .btns { display: flex; }
    .sb { height: 24px; width: 24px; border: 1px solid #aaa; border-radius: 3px; display: flex; align-items: center; justify-content: center; background: #fff; gap: 1px; margin-right: 4px; }
    .sb.w { width: 35px; }
    .sb.gp { margin-right: 7px; }
    .sb.on { background: #d6e6fa; border-color: #6aa5ee; }
    .sb i { border: 2px solid transparent; border-top-color: #555; margin-top: 3px; }
  `;

  private renderHeader() {
    const menu = ["开始", "工程设置", "建模", "工程量", "视图", "工具", "云应用", "造价协作", "协同建模(限免)", "IGMS"];
    return html`
      <div class="header">
        <div class="logo">
          <svg width="30" height="29" viewBox="0 0 30 29"><defs><linearGradient id="lg" x1="0" y1="0" x2="0" y2="1"><stop offset="0" stop-color="#2fb4f7"/><stop offset="1" stop-color="#0f7fe6"/></linearGradient></defs><path d="M2 1h26a2 2 0 0 1 1 4c-2 5-7 3-9 5v16a3 3 0 0 1-7 0V10C11 8 3 9 1 5a2 2 0 0 1 1-4z" fill="url(#lg)"/></svg>
          <i></i>
        </div>
        <div class="rows">
          <div class="r1">
            <div class="qat">
              ${ic("upload", 16)}${ic("newdoc", 16)}${ic("folder", 16)}${ic("save", 16)}${ic("undo", 16)}<span class="cr"></span>
              ${ic("redo", 16)}<span class="cr off"></span>${ic("boxsum", 16)}${ic("calc", 16)}${ic("tableq", 16)}${ic("rebarq", 16)}${ic("editreb", 16)}${ic("reb3d", 16)}${ic("copyplus", 16)}<span class="more">▾</span>
            </div>
            <div class="title">广联达BIM土建计量平台 GTJ2021 - [F:\\班组\\木工班组\\木工班\\52#.GTJ]</div>
            <div class="win"><b></b><u></u></div>
          </div>
          <div class="r2">
            ${menu.map((m) => html`<div class="menu ${m === "工程量" ? "on" : ""}">${m}</div>`)}
            <div class="sp"></div>
            <div class="search"><span>土建计量GTJ中，图纸定位错了，如何重新定位？</span>${ic("mag", 10)}</div>
            <div class="user">${ic("avatar", 17)}<span>尹卫军</span></div>
            <div class="tools">${ic("chat", 15)}<span>?</span><i></i>${ic("shirt", 15)}</div>
          </div>
        </div>
        <div class="tip">遇到问题，搜一搜<em>立即尝试</em></div>
      </div>`;
  }

  private big(n: string, t: string) {
    return html`<div class="big">${ic(n)}<span>${t}</span></div>`;
  }

  private renderRibbon() {
    const groups: [string, [string, string][]][] = [
      ["汇总", [["cloudsum", "云汇总"], ["boxsum", "汇总计算"], ["sumsel", "汇总选中图元"]]],
      ["土建计算结果", [["calc", "查看计算式"], ["tableq", "查看工程量"]]],
      ["钢筋计算结果", [["rebarq", "查看钢筋量"], ["editreb", "编辑钢筋"], ["reb3d", "钢筋三维"]]],
      ["检查", [["check", "合法性检查"]]],
      ["报表", [["report", "查看报表"]]],
      ["指标", [["cloudbar", "云指标"]]],
      ["表格算量", [["tableedit", "表格算量"]]],
    ];
    return html`
      <div class="ribbon">
        <div class="grp g1">
          <div class="ct">
            <div class="sel-btn">${ic("arrow", 27)}<span>选择</span></div>
            <div class="col c2">
              <div class="sm">${ic("dropper", 15)}拾取构件</div>
              <div class="sm">${ic("batch", 15)}批量选择</div>
              <div class="sm third">${ic("prop", 15)}按属性选择<i></i></div>
            </div>
            <div class="col">
              <div class="sm">${ic("find", 15)}查找图元</div>
              <div class="sm">${ic("filter", 15)}过滤图元</div>
            </div>
          </div>
          <div class="lb">选择</div>
        </div>
        ${groups.map(([lb, items], i) => html`
          <div class="grp ${i === groups.length - 1 ? "last" : ""}">
            <div class="ct">${items.map(([n, t]) => this.big(n, t))}</div>
            <div class="lb">${lb}</div>
          </div>`)}
      </div>`;
  }

  private renderNav() {
    return html`
      <div class="nav">
        <div class="strip"></div>
        <div class="ph">导航栏</div>
        <div class="navtb">
          <span class="spark">✦</span>
          <div class="nb"><svg width="16" height="14" viewBox="0 0 16 14" fill="none" stroke="#2e80ea"><path d="M5 2h11M5 7h11M5 12h11"/><circle cx="1.5" cy="2" r="1.2"/><circle cx="1.5" cy="7" r="1.2"/><circle cx="1.5" cy="12" r="1.2"/></svg></div>
          <div class="nb"><svg width="16" height="14" viewBox="0 0 16 14" fill="none" stroke="#2e80ea"><rect x=".5" y=".5" width="15" height="13" rx="1"/><path d="M3 4h2M7 4h6M3 7h2M7 7h6M3 10h2M7 10h4"/></svg></div>
        </div>
        <div class="navbody">
          <div class="navlist">
            ${NAV.map((n) => html`
              <div class="nr ${n.sel ? "sel" : ""} ${n.g ? "grp2" : ""}">
                ${n.i ? html`<span class="nic">${ic(n.i, 18)}</span>` : ""}
                <span class="tx">${n.t}</span>
                ${n.lock ? html`<span class="lk">${ic("lock", 10)}</span>` : ""}
                ${n.free ? html`<span class="free">免费试用</span>` : ""}
                ${n.dot ? html`<span class="dot"></span>` : ""}
              </div>`)}
          </div>
          <div class="sbar"><b></b></div>
        </div>
      </div>`;
  }

  private renderMid() {
    return html`
      <div class="midc">
        <div class="pane a">
          <div class="strip"></div>
          <div class="tabs"><div class="tab">构件列表</div><div class="tab off">图纸管理</div></div>
          <div class="tb">
            <div class="t">${ic("newdoc", 15)}新建<i></i></div>
            <div class="t">${ic("copy", 15)}复制</div>
            <div class="t">${ic("del", 14)}删除</div>
            <div class="mo">▸▸</div>
          </div>
          <div class="srch"><span>搜索构件...</span>${ic("mag", 10)}</div>
          <div class="lst">
            <div class="items">
              ${COMPS.map((c) => html`<div class="ci ${c === "GBZ7a <5>" ? "on" : ""}"><span>${c}</span></div>`)}
            </div>
            <div class="scr s1"><b></b></div>
          </div>
        </div>
        <div class="pane b">
          <div class="strip"></div>
          <div class="tabs"><div class="tab">属性列表</div><div class="tab off">图层管理</div></div>
          <div class="ptable">
            <div class="pgrid">
              <div class="hd"></div><div class="hd">属性名称</div><div class="hd">属性值</div>
              ${PROPS.map(([i, n, v, link, ex]) => html`
                <div class="ix">${i}</div>
                ${ex
                  ? html`<div class="ex"><span class="plus">+</span>${n}</div>`
                  : html`<div class=${link ? "ln" : ""}>${n}</div>`}
                <div>${v.includes("|")
                  ? (() => { const [a, b, c] = v.split("|"); return html`${a}<sup>${b}</sup>${c}`; })()
                  : v}</div>`)}
            </div>
            <div class="scr s2"><b></b></div>
          </div>
        </div>
      </div>`;
  }

  private renderCanvas() {
    return html`
      <div class="cv">
        <svg class="scene" width="1165" height="842" viewBox="464 166 1165 842" fill="none">${scene()}</svg>
        <div class="hint">${ic("pinch", 15)}<span>按鼠标左键指定第一个角点，或拾取构件图元</span></div>
        <div class="tip2">点击图标可调节提示信息位置~<span>不再提示</span></div>
        <div class="vt">
          ${ic("orbit", 20)}${ic("d2", 19)}${ic("cube", 20)}<div class="dn"></div>${ic("cubef", 20)}<div class="dn"></div>${ic("frame", 20)}${ic("dcube", 20)}<hr />${ic("listeye", 20)}
        </div>
      </div>`;
  }

  private renderRight() {
    return html`
      <div class="right">
        <div class="strip"></div>
        <div class="ph r">显示设置</div>
        <div class="rtabs"><div class="rt">图元显示</div><div class="rt off">楼层显示</div></div>
        <div class="lay">
          <div class="lr hd"><div>图层构件</div><div class="on">显示图元</div><div>显示名称</div></div>
          ${LAYERS.map((l) => html`
            <div class="lr">
              <div class="tree">
                <span class="rail1"></span>
                ${l.g
                  ? html`<span class="mbox"></span><em>${l.t}</em>`
                  : html`<span class="rail2 ${l.last ? "end" : ""}"></span><span class="hl"></span><em>${l.t}</em>`}
              </div>
              <div class=${l.focus ? "focus" : ""}>
                <span class="cb ${l.k || ""}">${l.k === "c" ? html`<svg width="10" height="8" viewBox="0 0 10 8" fill="none" stroke="#fff" stroke-width="1.8"><path d="M1 4l3 3 5-6"/></svg>` : ""}</span>
              </div>
              <div><span class="cb"></span></div>
            </div>`)}
        </div>
        <div class="rfoot"><div class="rbtn">恢复默认设置</div></div>
      </div>`;
  }

  private renderStatus() {
    const sb = (n: string, cls = "", drop = false) =>
      html`<div class="sb ${cls}">${ic(n, 17)}${drop ? html`<i></i>` : ""}</div>`;
    return html`
      <div class="status">
        <div class="txt first">层高： 3</div>
        <div class="txt">标高： 43.95~46.95</div>
        <div class="txt">选中图元：1(89)</div>
        <div class="txt">隐藏图元：0</div>
        <div class="btns">
          ${sb("sb0")}${sb("sb1", "w on gp", true)}${sb("sb2", "gp")}${sb("sb3", "w", true)}${sb("sb4", "w", true)}${sb("sb5", "on")}${sb("sb6")}
        </div>
      </div>`;
  }

  render() {
    return html`
      ${this.renderHeader()}
      ${this.renderRibbon()}
      <div class="floors">
        <div class="slct a">第15层<i></i></div>
        <div class="slct">柱<i></i></div>
        <div class="slct w">柱<i></i></div>
        <div class="slct w">GBZ7a<i></i></div>
      </div>
      <div class="main">
        ${this.renderNav()}
        ${this.renderMid()}
        <div class="split"><b></b></div>
        ${this.renderCanvas()}
        <div class="split"><b></b></div>
        ${this.renderRight()}
      </div>
      ${this.renderStatus()}
    `;
  }
}
